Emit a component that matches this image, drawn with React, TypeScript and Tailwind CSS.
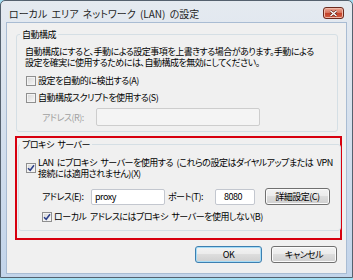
import React from "react";

function CheckBox({ checked }: { checked?: boolean }) {
  return (
    <span className="flex h-[10px] w-[10px] shrink-0 items-center justify-center border border-[#8f8f8f] bg-[linear-gradient(135deg,#d6d6d6,#f8f8f8)] shadow-[inset_0_0_0_1px_#f3f3f3]">
      {checked && (
        <svg width="8" height="8" viewBox="0 0 8 8">
          <path d="M1 4.2 L3.2 6.3 L7 1.2" fill="none" stroke="#2b3f8a" strokeWidth="1.5" />
        </svg>
      )}
    </span>
  );
}

function WinButton({
  children,
  primary,
  className,
}: {
  children: React.ReactNode;
  primary?: boolean;
  className: string;
}) {
  return (
    <button
      type="button"
      className={
        "flex h-[17px] items-center justify-center rounded-[3px] border bg-[linear-gradient(to_bottom,#f3f3f3_0%,#ebebeb_50%,#dddddd_50%,#cfcfcf_100%)] leading-none " +
        (primary
          ? "border-[#3c7fb1] shadow-[inset_0_0_0_1px_#a6dcf6] "
          : "border-[#707070] shadow-[inset_0_0_0_1px_#fbfbfb] ") +
        className
      }
    >
      {children}
    </button>
  );
}

export default function App() {
  return (
    <div className="h-[280px] w-[353px] bg-[#a3def2] text-[9px] leading-[11px] tracking-[-0.5px] text-black [font-family:'Noto_Sans_CJK_JP',sans-serif] [font-feature-settings:'palt'] [word-spacing:2px]">
      <div className="flex h-[278px] flex-col rounded-t-[5px] border border-[#55616e] bg-[linear-gradient(to_bottom,#e5eaf0,#c2d4ea)] px-[5px] pb-[3px]">
        {/* title bar */}
        <div className="flex h-[21px] shrink-0 items-start justify-between pl-[3px] pr-[3px] pt-[6px]">
          <span className="text-[10px] leading-[14px] tracking-normal text-[#1e1e1e]">
            ローカル エリア ネットワーク (LAN) の設定
          </span>
          <span className="flex h-[12px] w-[21px] items-center justify-center rounded-[3px] border border-[#6b2a1e] bg-[linear-gradient(to_bottom,#eaa897_0%,#d9755e_45%,#c4432b_55%,#d45c40_100%)] shadow-[inset_0_0_0_1px_#f0b8a8]">
            <svg width="9" height="7" viewBox="0 0 9 7">
              <path d="M1.5 1 L7.5 6 M7.5 1 L1.5 6" stroke="#5a2016" strokeWidth="2.6" />
              <path d="M1.5 1 L7.5 6 M7.5 1 L1.5 6" stroke="#ffffff" strokeWidth="1.4" />
            </svg>
          </span>
        </div>

        {/* client area */}
        <div className="flex flex-1 flex-col border border-[#a9bcd3] bg-[#f0f0f0]">
          <fieldset className="ml-[9px] mt-[5px] w-[322px] rounded-[3px] border border-[#d5dfe5] px-[8px] pb-[5px]">
            <legend className="ml-[-5px] px-[2px] leading-[13px]">自動構成</legend>
            <p className="mt-[5px] whitespace-nowrap leading-[11px]">
              自動構成にすると、手動による設定事項を上書きする場合があります。手動による
              <br />
              設定を確実に使用するためには、自動構成を無効にしてください。
            </p>
            <div className="ml-[1px] mt-[6px] flex h-[13px] items-center gap-[2px]">
              <CheckBox />
              <span>設定を自動的に検出する(A)</span>
            </div>
            <div className="ml-[1px] mt-[4px] flex h-[13px] items-center gap-[2px]">
              <CheckBox />
              <span>自動構成スクリプトを使用する(S)</span>
            </div>
            <div className="mt-[4px] flex h-[18px] items-center pl-[17px]">
              <span className="w-[54px] text-[#a0a0a0]">アドレス(R):</span>
              <span className="h-[18px] w-[164px] rounded-[2px] border border-[#cdcdcd] bg-[#f4f4f4]" />
            </div>
          </fieldset>

          <div className="ml-[8px] mt-[4px] w-[327px] border-2 border-[#d7000f]">
            <fieldset className="mb-[7px] ml-[1px] w-[320px] rounded-[3px] border border-[#d5dfe5] px-[7px] pb-[7px]">
              <legend className="ml-[-6px] px-[2px] leading-[13px]">プロキシ サーバー</legend>
              <div className="mt-[6px] flex items-center gap-[2px]">
                <CheckBox checked />
                <span className="whitespace-nowrap leading-[11px]">
                  LAN にプロキシ サーバーを使用する (これらの設定はダイヤルアップまたは VPN
                  <br />
                  接続には適用されません)(X)
                </span>
              </div>
              <div className="mt-[9px] flex h-[17px] items-center pl-[16px]">
                <span className="w-[49px]">アドレス(E):</span>
                <span className="flex h-[16px] w-[74px] items-center rounded-[2px] border border-[#c3c7cf] bg-white pl-[3px]">
                  proxy
                </span>
                <span className="ml-[3px] w-[47px]">ポート(T):</span>
                <span className="flex h-[16px] w-[40px] items-center rounded-[2px] border border-[#c3c7cf] bg-white pl-[8px]">
                  8080
                </span>
                <WinButton className="ml-[10px] w-[65px]">詳細設定(C)</WinButton>
              </div>
              <div className="mt-[5px] flex h-[13px] items-center gap-[2px] pl-[16px]">
                <CheckBox checked />
                <span>ローカル アドレスにはプロキシ サーバーを使用しない(B)</span>
              </div>
            </fieldset>
          </div>

          <div className="mt-[6px] flex justify-end gap-[9px] pr-[9px]">
            <WinButton primary className="w-[67px]">
              OK
            </WinButton>
            <WinButton className="w-[66px]">キャンセル</WinButton>
          </div>
        </div>
      </div>
    </div>
  );
}
